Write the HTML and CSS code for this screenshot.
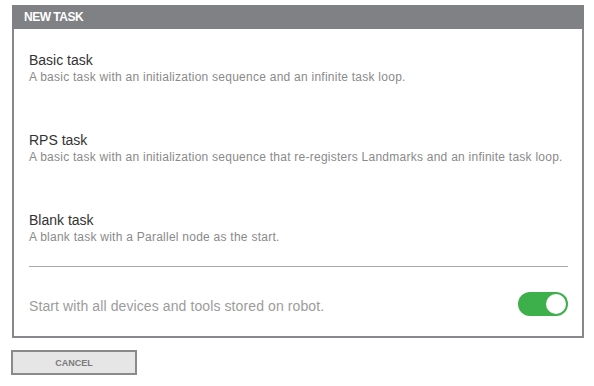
FILE: index.html
```html
<html><head>
<meta charset="UTF-8">
<meta name="viewport" content="width=device-width, initial-scale=1.0">
<title>New Task</title>
<link rel="stylesheet" href="styles.css">
</head>
<body>
  <div class="dialog">
    <div class="dialog-header">NEW TASK</div>
    <div class="dialog-body">
      <div class="task-list">
        <div class="task-item">
          <div class="task-title">Basic task</div>
          <div class="task-desc">A basic task with an initialization sequence and an infinite task loop.</div>
        </div>
        <div class="task-item">
          <div class="task-title">RPS task</div>
          <div class="task-desc">A basic task with an initialization sequence that re-registers Landmarks and an infinite task loop.</div>
        </div>
        <div class="task-item">
          <div class="task-title">Blank task</div>
          <div class="task-desc">A blank task with a Parallel node as the start.</div>
        </div>
      </div>
      <div class="option-row">
        <span class="option-label">Start with all devices and tools stored on robot.</span>
        <div class="toggle on"><div class="knob"></div></div>
      </div>
    </div>
  </div>
  <button class="cancel-btn">CANCEL</button>
</body>
</html>
```

FILE: styles.css
```css
body {
  font-family: "Liberation Sans", Arial, sans-serif;
  background-color: #ffffff;
  margin: 0;
  padding: 5px 10px 0 12px;
}
.dialog {
  width: 572px;
  box-sizing: border-box;
  border: 2px solid #87888b;
  border-top: none;
}
.dialog-header {
  background-color: #808185;
  color: #ffffff;
  font-weight: bold;
  font-size: 12px;
  letter-spacing: -0.5px;
  height: 24px;
  line-height: 25px;
  padding-left: 12px;
  margin: 0 -2px;
}
.dialog-body {
  padding: 22px 14px 20px 15px;
}
.task-item {
  height: 80px;
}
.task-title {
  font-size: 14px;
  line-height: 18px;
  color: #333333;
}
.task-desc {
  font-size: 12px;
  letter-spacing: 0.25px;
  line-height: 16px;
  color: #8a8a8a;
}
.task-list {
  border-bottom: 1px solid #a8a8a8;
  margin-bottom: 25px;
  height: 215px;
}
.option-row {
  display: flex;
  align-items: center;
  justify-content: space-between;
}
.option-label {
  font-size: 14px;
  letter-spacing: 0.1px;
  color: #9c9c9c;
  padding-top: 4px;
}
.toggle {
  width: 50px;
  height: 24px;
  border-radius: 12px;
  background-color: #3daf4b;
  position: relative;
}
.knob {
  position: absolute;
  top: 2px;
  right: 2px;
  width: 20px;
  height: 20px;
  border-radius: 50%;
  background-color: #ffffff;
}
.cancel-btn {
  display: block;
  margin: 12px 0 0 -1px;
  width: 126px;
  height: 25px;
  background-color: #e6e6e7;
  border: 2px solid #8a8a8c;
  color: #7a7a7a;
  font-family: "Liberation Sans", Arial, sans-serif;
  font-weight: bold;
  font-size: 9px;
  padding: 0;
}
```
